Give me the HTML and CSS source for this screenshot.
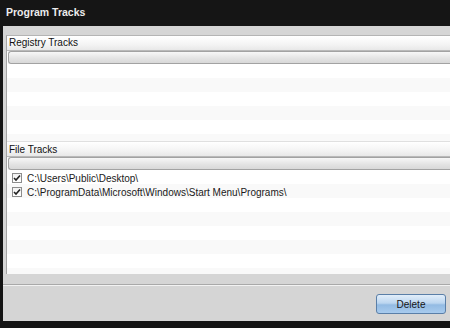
FILE: index.html
```html
<!doctype html>
<html lang="en">
  <head>
    <meta charset="UTF-8" />
    <title>Program Tracks</title>
    <link rel="stylesheet" href="styles.css">
  </head>
  <body>
    <div class="window">
      <div class="titlebar">Program Tracks</div>

      <div class="content">
        <div class="panel">
          <div class="group group-registry">
            <div class="group-head">Registry Tracks</div>
            <div class="col-head"></div>
            <div class="rows"></div>
          </div>

          <div class="group group-files">
            <div class="group-head">File Tracks</div>
            <div class="col-head"></div>
            <div class="rows">
              <label class="row">
                <span class="check">
                  <svg width="8" height="8" viewBox="0 0 8 8"><path d="M1 4 L3 6 L7 1.5" fill="none" stroke="#222" stroke-width="1.6"/></svg>
                </span>
                C:\Users\Public\Desktop\
              </label>
              <label class="row">
                <span class="check">
                  <svg width="8" height="8" viewBox="0 0 8 8"><path d="M1 4 L3 6 L7 1.5" fill="none" stroke="#222" stroke-width="1.6"/></svg>
                </span>
                C:\ProgramData\Microsoft\Windows\Start Menu\Programs\
              </label>
            </div>
          </div>
        </div>

        <div class="footer">
          <button class="delete-btn">Delete</button>
        </div>
      </div>
    </div>
  </body>
</html>
```

FILE: styles.css
```css
* {
  margin: 0;
  padding: 0;
  box-sizing: border-box;
}

body {
  background: #141414;
  font-family: Tahoma, "Liberation Sans", Arial, sans-serif;
  overflow: hidden;
}

.window {
  width: 450px;
  height: 328px;
  display: flex;
  flex-direction: column;
  overflow: hidden;
}

.titlebar {
  height: 26px;
  padding: 6px 0 0 6px;
  color: #ececec;
  font-size: 10.5px;
  font-weight: bold;
  background: #151515;
}

.content {
  height: 295px;
  margin-left: 3px;
  padding: 9px 0 0 3px;
  background: #d5d5d5;
  display: flex;
  flex-direction: column;
}

.panel {
  margin-right: -10px;
  height: 239px;
  border-left: 1px solid #a4a4a4;
  border-top: 1px solid #b4b4b4;
  background: #fff;
  display: flex;
  flex-direction: column;
}

.group-head {
  height: 15px;
  padding: 1px 0 0 2px;
  font-size: 10px;
  color: #111;
  background: linear-gradient(#ffffff, #f4f4f4 60%, #e8e8e8);
  border-bottom: 1px solid #b9b9b9;
}

.group-files .group-head {
  height: 16px;
  padding-top: 2px;
  border-top: 1px solid #e0e0e0;
}

.col-head {
  height: 13px;
  margin-left: 1px;
  border: 1px solid #a2a2a2;
  border-right: none;
  border-radius: 3px 0 0 3px;
  background: linear-gradient(#f7f7f7, #e4e4e4 55%, #d8d8d8);
}

.rows {
  background: repeating-linear-gradient(#ffffff 0 14px, #f9f9f9 14px 28px);
}

.group-registry .rows {
  height: 77px;
}

.group-files .rows {
  height: 104px;
  padding-top: 1px;
}

.row {
  height: 14px;
  display: flex;
  align-items: center;
  gap: 5px;
  padding-left: 5px;
  font-size: 10px;
  color: #1a1a1a;
  white-space: nowrap;
}

.check {
  width: 10px;
  height: 10px;
  border: 1px solid #8c8c8c;
  background: linear-gradient(#f2f2f2, #fff);
  display: flex;
  align-items: center;
  justify-content: center;
}

.footer {
  flex: 1;
  margin-top: 10px;
  margin-left: -3px;
  border-top: 1px solid #a9a9a9;
  box-shadow: inset 0 1px 0 #f2f2f2;
  display: flex;
  justify-content: flex-end;
  align-items: flex-start;
  padding: 9px 4px 0 0;
}

.delete-btn {
  width: 70px;
  height: 20px;
  font-family: Tahoma, "Liberation Sans", Arial, sans-serif;
  font-size: 10px;
  color: #151515;
  border: 1px solid #5a7fa8;
  border-radius: 3px;
  background: linear-gradient(#e2eefa, #bcd6f0 45%, #93bbe3 55%, #a8cbee);
}
```
